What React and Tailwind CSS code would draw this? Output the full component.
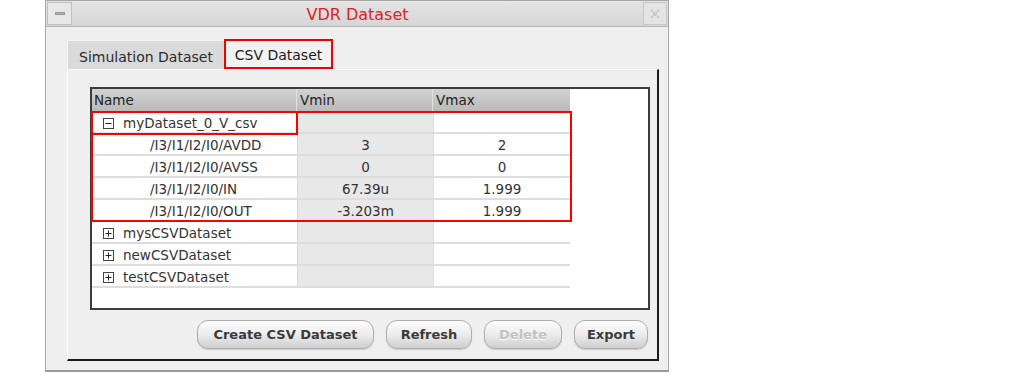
import React from 'react';

const rows = [
  { name: 'myDataset_0_V_csv', level: 0, open: true, vmin: '', vmax: '' },
  { name: '/I3/I1/I2/I0/AVDD', level: 1, vmin: '3', vmax: '2' },
  { name: '/I3/I1/I2/I0/AVSS', level: 1, vmin: '0', vmax: '0' },
  { name: '/I3/I1/I2/I0/IN', level: 1, vmin: '67.39u', vmax: '1.999' },
  { name: '/I3/I1/I2/I0/OUT', level: 1, vmin: '-3.203m', vmax: '1.999' },
  { name: 'mysCSVDataset', level: 0, open: false, vmin: '', vmax: '' },
  { name: 'newCSVDataset', level: 0, open: false, vmin: '', vmax: '' },
  { name: 'testCSVDataset', level: 0, open: false, vmin: '', vmax: '' },
];

function TreeBox({ open }) {
  return (
    <svg width="11" height="11" viewBox="0 0 11 11" className="shrink-0">
      <rect x="0.5" y="0.5" width="10" height="10" fill="white" stroke="#444" />
      <line x1="2.5" y1="5.5" x2="8.5" y2="5.5" stroke="#222" />
      {!open && <line x1="5.5" y1="2.5" x2="5.5" y2="8.5" stroke="#222" />}
    </svg>
  );
}

function Button({ label, width, disabled }) {
  return (
    <button
      className={`h-[29px] rounded-[11px] border border-[#adadad] bg-gradient-to-b from-[#fdfdfd] via-[#ececec] to-[#cfcfcf] text-[13px] font-bold shadow-[0_1px_1px_rgba(0,0,0,0.15)] ${width} ${
        disabled ? 'text-[#c2c2c2] [text-shadow:0_1px_0_#fff]' : 'text-[#3a3a3a]'
      }`}
    >
      {label}
    </button>
  );
}

export default function App() {
  return (
    <div className="w-[1013px] h-[380px] bg-white font-['DejaVu_Sans',sans-serif] text-[#222]">
      <div className="ml-[45px] w-[624px] h-[372px] border border-[#a8a8a8] border-b-2 border-b-[#9a9a9a] bg-[#efefef] flex flex-col">
        {/* title bar */}
        <div className="h-[26px] flex items-stretch bg-gradient-to-b from-[#e4e4e4] to-[#d6d6d6] border-b border-[#b4b4b4] p-[1px]">
          <div className="w-[25px] flex items-center justify-center border border-[#c0c0c0] bg-[#e8e8e8]">
            <div className="w-[10px] h-[3px] bg-[#b0b0b0] border border-[#999]" />
          </div>
          <div className="flex-1 flex items-center justify-center pt-[2px] text-[16px] text-[#e0231c]">VDR Dataset</div>
          <div className="w-[24px] flex items-center justify-center border border-[#c8c8c8] bg-[#e4e4e4]">
            <svg width="12" height="12" viewBox="0 0 12 12">
              <path d="M2 2 L10 10 M10 2 L2 10" stroke="#c4c4c4" strokeWidth="2" strokeDasharray="2 1" />
            </svg>
          </div>
        </div>

        {/* body */}
        <div className="flex-1 pl-[21px] pt-[12px]">
          {/* tabs */}
          <div className="flex items-end h-[30px]">
            <div className="h-[29px] w-[157px] flex items-center justify-center pt-[4px] bg-[#dadada] border-t border-l border-[#f6f6f6] text-[14px] text-[#2a2a2a]">
              Simulation Dataset
            </div>
            <div className="h-[30px] w-[109px] flex items-center justify-center pt-[3px] border-2 border-[#f00000] bg-[#f2f2f2] text-[14px] text-[#1c1c1c]">
              CSV Dataset
            </div>
          </div>

          {/* panel */}
          <div className="w-[592px] h-[292px] border-t border-l border-[#fbfbfb] border-r-2 border-b-2 border-r-[#1a1a1a] border-b-[#1a1a1a] pl-[22px] pt-[17px] pr-[7px] flex flex-col">
            {/* table */}
            <div className="w-[560px] h-[223px] border-2 border-[#3c3c3c] bg-white text-[13.5px] text-[#333]">
              <div className="flex h-[23px] w-[478px] bg-gradient-to-b from-[#d2d2d2] to-[#b9b9b9] border-b border-[#9c9c9c] text-[#222]">
                <div className="w-[205px] pl-[2px] flex items-center border-r border-[#e0e0e0]">Name</div>
                <div className="w-[136px] pl-[3px] flex items-center border-r border-[#e0e0e0]">Vmin</div>
                <div className="w-[137px] pl-[3px] flex items-center">Vmax</div>
              </div>
              <div className="relative w-[478px]">
                {rows.map((r) => (
                  <div key={r.name} className="flex h-[22px] border-b-2 border-[#dddddd]">
                    <div className="w-[205px] flex items-center pt-[3px]">
                      {r.level === 0 ? (
                        <div className="flex items-center gap-[9px] pl-[11px]">
                          <TreeBox open={r.open} />
                          <span>{r.name}</span>
                        </div>
                      ) : (
                        <span className="pl-[58px]">{r.name}</span>
                      )}
                    </div>
                    <div className="w-[136px] flex items-center justify-center pt-[3px] bg-[#e8e8e8] border-l border-[#d6d6d6]">{r.vmin}</div>
                    <div className="w-[137px] flex items-center justify-center pt-[3px] border-l border-[#dedede]">{r.vmax}</div>
                  </div>
                ))}
                <div className="absolute left-[-1px] top-[-1px] w-[481px] h-[111px] border-2 border-[#ff0000]" />
                <div className="absolute left-[-1px] top-[-1px] w-[207px] h-[24px] border-2 border-[#ff0000]" />
              </div>
            </div>

            {/* buttons */}
            <div className="mt-[10px] flex justify-end gap-[12px] pr-[2px]">
              <Button label="Create CSV Dataset" width="w-[177px]" />
              <Button label="Refresh" width="w-[86px]" />
              <Button label="Delete" width="w-[78px]" disabled />
              <Button label="Export" width="w-[74px]" />
            </div>
          </div>
        </div>
      </div>
    </div>
  );
}
